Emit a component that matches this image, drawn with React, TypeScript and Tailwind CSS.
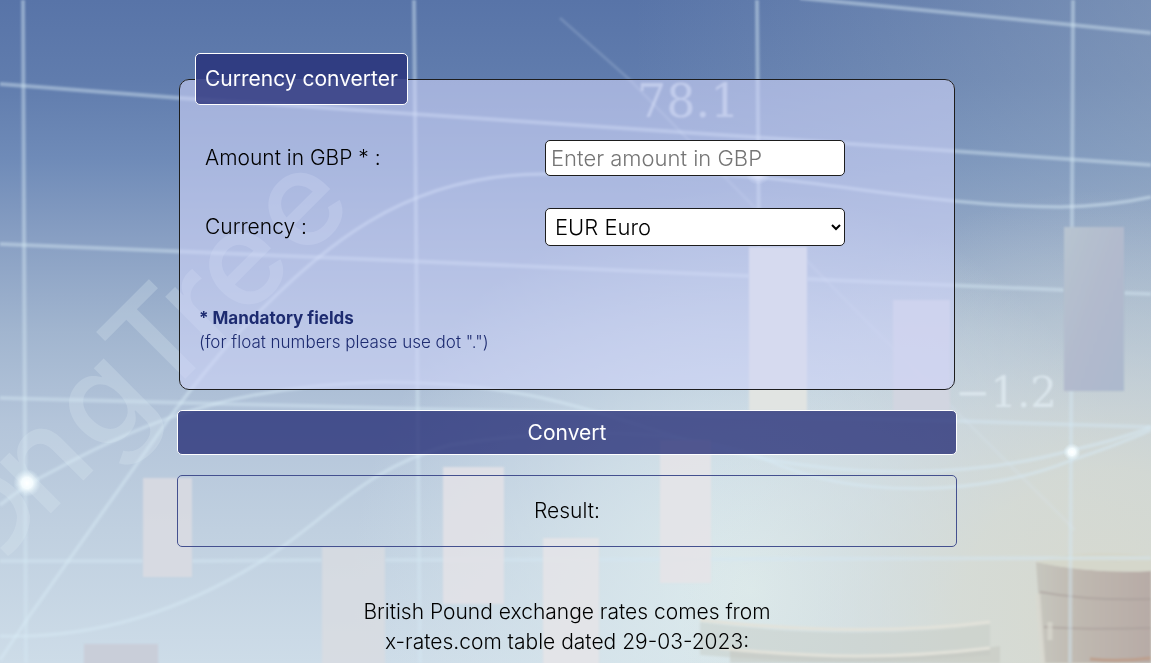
import { useState } from "react";
import type { FormEvent } from "react";

const currencies = [
  { code: "EUR", name: "Euro" },
  { code: "USD", name: "US Dollar" },
  { code: "PLN", name: "Polish Zloty" },
  { code: "CHF", name: "Swiss Franc" },
];

function MarketBackdrop() {
  return (
    <svg
      className="pointer-events-none absolute inset-0 h-full w-full"
      viewBox="0 0 1151 663"
      preserveAspectRatio="xMidYMid slice"
      aria-hidden="true"
    >
      <defs>
        <linearGradient id="sky" x1="0" y1="0" x2="0" y2="1">
          <stop offset="0" stopColor="#5874a8" />
          <stop offset="0.12" stopColor="#607cad" />
          <stop offset="0.24" stopColor="#6f8bb8" />
          <stop offset="0.36" stopColor="#889fc3" />
          <stop offset="0.5" stopColor="#a1b5cf" />
          <stop offset="0.64" stopColor="#b4c5da" />
          <stop offset="0.8" stopColor="#c0d0e0" />
          <stop offset="1" stopColor="#cddce8" />
        </linearGradient>
        <linearGradient id="haze" x1="0" y1="0" x2="1" y2="0">
          <stop offset="0.55" stopColor="#b4c4ce" stopOpacity="0" />
          <stop offset="1" stopColor="#b4c4ce" stopOpacity="0.35" />
        </linearGradient>
        <radialGradient id="warm" gradientUnits="userSpaceOnUse" cx="1110" cy="620" r="430">
          <stop offset="0" stopColor="#d7d9cf" />
          <stop offset="0.35" stopColor="#d7dbd3" stopOpacity="0.85" />
          <stop offset="0.65" stopColor="#d4dbda" stopOpacity="0.4" />
          <stop offset="1" stopColor="#d4dbdc" stopOpacity="0" />
        </radialGradient>
        <radialGradient id="mint" gradientUnits="userSpaceOnUse" cx="750" cy="590" r="400">
          <stop offset="0" stopColor="#deeced" />
          <stop offset="0.45" stopColor="#d9e7ec" stopOpacity="0.65" />
          <stop offset="1" stopColor="#d6e4ec" stopOpacity="0" />
        </radialGradient>
        <radialGradient id="spark">
          <stop offset="0" stopColor="#fff" />
          <stop offset="0.4" stopColor="#f6fdff" stopOpacity="0.95" />
          <stop offset="1" stopColor="#dff2fa" stopOpacity="0" />
        </radialGradient>
        <linearGradient id="tower" x1="0" y1="0" x2="1" y2="1">
          <stop offset="0" stopColor="#b7c4d0" />
          <stop offset="0.5" stopColor="#b2bacd" />
          <stop offset="1" stopColor="#acb9cd" />
        </linearGradient>
        <linearGradient id="coin" x1="0" y1="0" x2="1" y2="0">
          <stop offset="0" stopColor="#c6c6be" />
          <stop offset="0.4" stopColor="#bfb8b0" />
          <stop offset="1" stopColor="#b7aba6" />
        </linearGradient>
        <filter id="soft" x="-5%" y="-5%" width="110%" height="110%">
          <feGaussianBlur stdDeviation="0.8" />
        </filter>
      </defs>

      <rect width="1151" height="663" fill="url(#sky)" />
      <rect width="1151" height="663" fill="url(#haze)" />
      <rect width="1151" height="663" fill="url(#mint)" />
      <rect width="1151" height="663" fill="url(#warm)" />

      {/* Stacks of coins */}
      <g filter="url(#soft)">
        <path d="M700 622 Q860 642 990 624 V655 Q850 668 700 655Z" fill="#c7cdc8" opacity="0.5" />
        <path d="M730 648 Q870 668 1000 646 V663 H730Z" fill="#c4c6bf" opacity="0.55" />
        <path d="M700 620 Q860 638 990 622 M720 648 Q860 664 990 648" fill="none" stroke="#e2e2da" strokeWidth="3" />
        <path d="M1036 562 Q1090 574 1151 571 V663 H1044 L1042 640 L1038 590Z" fill="url(#coin)" />
        <path d="M1036 562 Q1080 548 1151 556 V571 Q1090 574 1036 562Z" fill="#d5d7cb" />
        <path d="M1040 592 Q1090 601 1151 599 M1044 627 Q1090 630 1151 628" fill="none" stroke="#a79d99" strokeWidth="2" opacity="0.6" />
        <path d="M1090 659 Q1120 662 1151 658" fill="none" stroke="#bd9f8c" strokeWidth="3" />
        <path d="M1038 594 L1043 663 M1050 622 V640" fill="none" stroke="#dad9d0" strokeWidth="5" opacity="0.7" />
      </g>

      {/* Diagonal watermark lettering */}
      <g fill="#dceaf2" opacity="0.28">
        <g transform="translate(44 520) rotate(-45)" fontFamily="Inter, sans-serif" fontSize="132" fontWeight="500">
          <text x="0" y="0">n</text>
          <text x="84" y="0">g</text>
          <text x="164" y="0">T</text>
          <text x="234" y="0">r</text>
          <text x="281" y="0">e</text>
          <text x="365" y="0">e</text>
        </g>
        <path d="M0 478 Q24 490 30 516 Q30 540 8 556 L0 548 Q17 534 17 516 Q14 500 0 492Z" />
      </g>

      {/* Grid */}
      <g filter="url(#soft)" fill="none" stroke="#d3e6f2" strokeOpacity="0.46" strokeWidth="4">
        <path d="M23 0 L26 663 M414 0 L420 663 M757 0 L759 247 M1073 0 L1070 663" />
        <path d="M800 -2 L1073 25 L1151 33" />
        <path d="M0 84 L180 98 L385 112 L767 138 L1151 165" />
        <path d="M0 244 L385 260 L749 276 M807 279 L1064 290 M1124 293 L1151 294" />
        <path d="M0 398 L384 408 L958 421 L1151 427" />
        <path d="M0 561 H143 M192 561 L322 560 M385 560 L1151 558" />
      </g>

      {/* Trend curves */}
      <g filter="url(#soft)" fill="none" stroke="#d8ebf4" strokeOpacity="0.48" strokeWidth="3.5">
        <path d="M0 505 Q28 483 55 470 C150 418 240 385 384 382 C500 382 570 402 660 432 C740 458 820 472 905 472 C980 471 1030 462 1072 450 Q1115 441 1151 427" />
        <path d="M0 636 C120 640 210 593 260 562 C330 518 360 470 450 445 C580 425 690 430 767 460 C860 502 990 494 1072 460 Q1120 444 1151 430" />
        <path d="M0 660 L30 615 L170 417 Q205 370 240 331 C320 250 400 174 545 174 H690 C800 174 920 206 1060 207 Q1110 206 1151 197" />
        <path d="M560 18 L630 80 L757 210 L870 325 L960 415 L1075 530" strokeOpacity="0.18" strokeWidth="3" />
      </g>

      {/* Chart columns */}
      <g filter="url(#soft)">
        <rect x="749" y="247" width="58" height="164" fill="#e1e4e2" />
        <rect x="893" y="300" width="57" height="111" fill="#d2d5e1" opacity="0.85" />
        <rect x="1064" y="227" width="60" height="164" fill="url(#tower)" />
        <rect x="143" y="478" width="49" height="99" fill="#dcdce2" opacity="0.82" />
        <rect x="443" y="467" width="61" height="137" fill="#e3e2e6" opacity="0.85" />
        <rect x="322" y="547" width="63" height="120" fill="#dadce1" opacity="0.8" />
        <rect x="543" y="538" width="56" height="130" fill="#e5e4e7" opacity="0.85" />
        <rect x="660" y="440" width="51" height="143" fill="#e5e4e7" opacity="0.88" />
        <rect x="84" y="644" width="74" height="24" fill="#c9ced9" />
      </g>

      <g filter="url(#soft)" fill="#e2edf3" fontFamily="'DejaVu Serif', serif" fontSize="42">
        <text x="637" y="117" fontSize="46" opacity="0.6">78.1</text>
        <text x="955" y="407" opacity="0.75">−1.2</text>
      </g>

      <circle cx="27" cy="483" r="14" fill="url(#spark)" />
      <circle cx="1072" cy="452" r="9" fill="url(#spark)" />
      <circle cx="758" cy="172" r="13" fill="url(#spark)" opacity="0.8" />
    </svg>
  );
}

export default function App() {
  const [amount, setAmount] = useState("");
  const [currency, setCurrency] = useState("EUR");
  const submit = (event: FormEvent) => event.preventDefault();

  return (
    <div className="relative min-h-screen overflow-hidden bg-[#a5b9d2] font-['Inter',sans-serif] text-[21px] leading-[30px] font-light text-black">
      <MarketBackdrop />
      <main className="relative px-4 pt-[53px] pr-[33px]">
        <form onSubmit={submit} className="mx-auto max-w-[780px]">
          <fieldset className="mx-0.5 rounded-[10px] border border-[#1d1d1d] bg-[rgba(207,212,248,0.6)] px-[15px] pb-[35px]">
            <legend className="rounded-[5px] border border-white bg-[rgba(31,39,114,0.73)] px-[9px] py-2.5 font-normal text-white">
              Currency converter
            </legend>
            <div className="grid gap-y-8 px-2.5 pt-[35px]">
              <div className="flex flex-wrap items-center">
                <label htmlFor="amount" className="w-[340px]">
                  Amount in GBP * :
                </label>
                <input
                  id="amount"
                  type="text"
                  inputMode="decimal"
                  required
                  placeholder="Enter amount in GBP"
                  value={amount}
                  onChange={(event) => setAmount(event.target.value)}
                  className="h-9 w-[300px] rounded-[5px] border border-[#1d1d1d] bg-white px-[5px] text-[22px] placeholder:text-[#757575]"
                />
              </div>
              <div className="flex flex-wrap items-center">
                <label htmlFor="currency" className="w-[340px]">
                  Currency :
                </label>
                <select
                  id="currency"
                  value={currency}
                  onChange={(event) => setCurrency(event.target.value)}
                  className="h-[38px] w-[300px] rounded-[5px] border border-[#1d1d1d] bg-white px-[5px] text-[22px]"
                >
                  {currencies.map(({ code, name }) => (
                    <option key={code} value={code}>
                      {code} {name}
                    </option>
                  ))}
                </select>
              </div>
            </div>
            <p className="mt-[60px] px-1 text-[17px] leading-6 text-[#1d2b70]">
              <strong className="font-bold">* Mandatory fields</strong>
              <br />
              (for float numbers please use dot ".")
            </p>
          </fieldset>
          <button
            type="submit"
            className="mt-5 block h-[45px] w-full cursor-pointer rounded-[5px] border border-white bg-[rgba(31,39,114,0.75)] font-normal text-white"
          >
            Convert
          </button>
          <p className="mt-5 rounded-[5px] border border-[#44508f] py-5 text-center">Result:</p>
        </form>
        <p className="mt-[50px] text-center">
          British Pound exchange rates comes from
          <br />
          x-rates.com table dated 29-03-2023:
        </p>
      </main>
    </div>
  );
}
